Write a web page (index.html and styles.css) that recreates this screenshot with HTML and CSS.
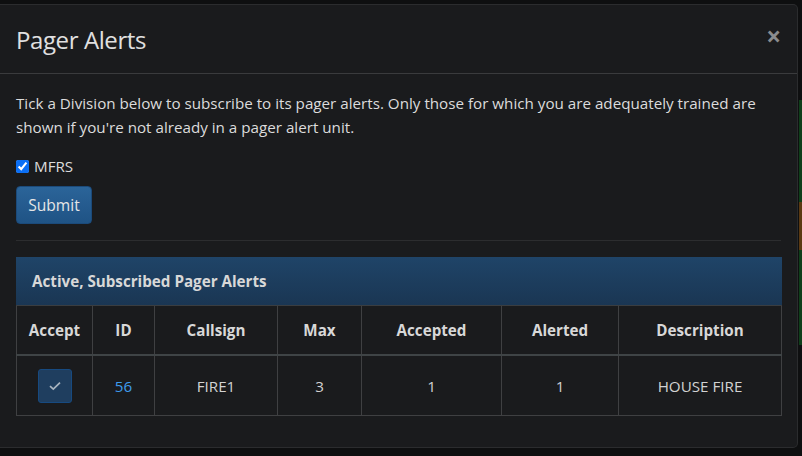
FILE: index.html
```html
<!DOCTYPE html>
<html>
<head>
<meta charset="utf-8">
<link rel="stylesheet" href="styles.css">
</head>
<body>
<div class="page">
  <div class="modal">
    <div class="modal-header">
      <h4 class="modal-title">Pager Alerts</h4>
      <span class="close">&times;</span>
    </div>
    <div class="modal-body">
      <p class="intro">Tick a Division below to subscribe to its pager alerts. Only those for which you are adequately trained are shown if you're not already in a pager alert unit.</p>
      <label class="check"><input type="checkbox" checked> MFRS</label>
      <button class="btn">Submit</button>
      <hr class="sep">
      <div class="panel">
        <div class="panel-heading">Active, Subscribed Pager Alerts</div>
        <table class="alerts">
          <colgroup>
            <col style="width:76px"><col style="width:62px"><col style="width:123px"><col style="width:84px"><col style="width:140px"><col style="width:117px"><col>
          </colgroup>
          <thead>
            <tr><th>Accept</th><th>ID</th><th>Callsign</th><th>Max</th><th>Accepted</th><th>Alerted</th><th>Description</th></tr>
          </thead>
          <tbody>
            <tr>
              <td><span class="accept"><svg width="14" height="12" viewBox="0 0 14 12"><path d="M2 6.2 L5.3 9.2 L12 2.6" fill="none" stroke="#a9b4bf" stroke-width="1.7"/></svg></span></td>
              <td><a class="id">56</a></td>
              <td>FIRE1</td>
              <td>3</td>
              <td>1</td>
              <td>1</td>
              <td>HOUSE FIRE</td>
            </tr>
          </tbody>
        </table>
      </div>
    </div>
  </div>
  <div class="side">
    <div class="strip green s1"></div>
    <div class="strip orange"></div>
    <div class="strip green s2"></div>
  </div>
</div>
</body>
</html>
```
FILE: styles.css
```css
html, body {
  margin: 0;
  padding: 0;
  background: #0e0f10;
}
body {
  width: 802px;
  height: 456px;
  overflow: hidden;
  font-family: "Open Sans", "Noto Sans", sans-serif;
  color: #dcdcdc;
}
.page {
  display: flex;
  padding-top: 4px;
}
.modal {
  width: 798px;
  height: 444px;
  box-sizing: border-box;
  background: #1a1b1d;
  border: 1px solid #2b2c2e;
  border-left: none;
  border-radius: 0 5px 5px 0;
  flex: none;
}
.modal-header {
  display: flex;
  align-items: center;
  justify-content: space-between;
  height: 69px;
  box-sizing: border-box;
  padding: 0 16px;
  border-bottom: 1px solid #3a3b3d;
}
.modal-title {
  margin: 0;
  font-size: 24px;
  font-weight: 400;
  color: #e0e0e0;
  letter-spacing: -0.4px;
}
.close {
  font-size: 26px;
  font-weight: 700;
  color: #8a8b8d;
  line-height: 1;
  margin-right: 0;
  margin-top: -6px;
}
.modal-body {
  padding: 17px 16px 0 16px;
}
.intro {
  margin: 0 0 18px 0;
  font-size: 15.2px;
  line-height: 24px;
  color: #dcdcdc;
}
.check {
  display: flex;
  align-items: center;
  gap: 5px;
  font-size: 15.2px;
  height: 18px;
  color: #dcdcdc;
}
.check input {
  margin: 0;
  width: 13px;
  height: 13px;
  accent-color: #0b6ff5;
}
.btn {
  display: block;
  margin-top: 11px;
  width: 76px;
  height: 38px;
  box-sizing: border-box;
  background: linear-gradient(#2b6499, #1f5385);
  border: 1px solid #1b4a7a;
  border-radius: 4px;
  color: #e6e6e6;
  font-family: inherit;
  font-size: 15.6px;
  padding: 0;
}
.sep {
  margin: 16px 0;
  border: 0;
  border-top: 1px solid #2c2d2f;
}
.panel {
  width: 766px;
}
.panel-heading {
  height: 49px;
  box-sizing: border-box;
  padding: 0 16px;
  display: flex;
  align-items: center;
  background: linear-gradient(#1f4468, #1a3653);
  font-weight: 700;
  font-size: 15.2px;
  color: #d8d8d8;
  border-bottom: 1px solid #3a3d40;
}
.alerts {
  width: 766px;
  border-collapse: collapse;
  table-layout: fixed;
  font-size: 15.2px;
}
.alerts th, .alerts td {
  border: 1px solid #3f4042;
  text-align: center;
  padding: 0;
}
.alerts th {
  height: 48px;
  font-weight: 700;
  color: #d8d8d8;
  border-top: none;
  border-bottom: 2px solid #3f4446;
}
.alerts td {
  height: 59px;
  color: #d2d2d2;
}
.accept {
  display: inline-flex;
  align-items: center;
  justify-content: center;
  width: 34px;
  height: 34px;
  box-sizing: border-box;
  background: #1f3e5f;
  border: 1px solid #174a80;
  border-radius: 3px;
  vertical-align: middle;
}
.id {
  color: #3f9ced;
}
.side {
  flex: 1;
  display: flex;
  flex-direction: column;
  padding-top: 96px;
}
.strip {
  width: 4px;
  margin-left: 1px;
}
.green { background: #0f3f1a; }
.s1 { height: 102px; }
.orange { background: #5b3a12; height: 48px; }
.s2 { height: 95px; }
```
